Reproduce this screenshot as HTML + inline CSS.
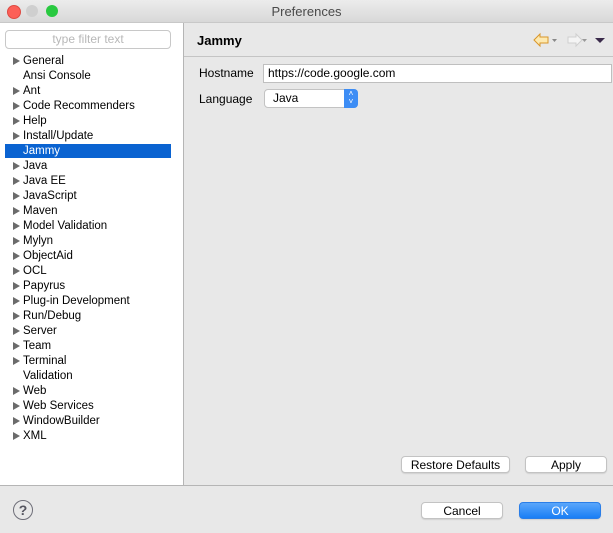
<html><head><style>
body{margin:0;width:613px;height:533px;background:#e8e8e8;font-family:"Liberation Sans",sans-serif;font-size:12px;color:#000;position:relative;overflow:hidden}
.a{position:absolute}
.tb{left:0;top:0;width:613px;height:22px;background:linear-gradient(#ececec,#d8d8d8);border-bottom:1px solid #c8c8c8;text-align:center;line-height:23px;font-size:13px;color:#4a4a4a}
.dot{top:5px;width:12px;height:12px;border-radius:50%}
.left{left:0;top:23px;width:183px;height:462px;background:#fff;border-right:1px solid #b5b5b5}
.it{left:23px;height:15px;line-height:15px;font-size:11.5px}
.tri{left:13px;width:0;height:0;border-left:7px solid #6b6b6b;border-top:4px solid transparent;border-bottom:4px solid transparent}
.btn{background:#fff;border:1px solid #c3c3c3;border-radius:4px;text-align:center;line-height:16px;font-size:12px;box-shadow:0 1px 1px rgba(0,0,0,.1)}
</style></head><body>
<div class="a tb">Preferences</div>
<div class="a dot" style="left:7px;background:#fc5f57;border:0.5px solid #de4a42"></div>
<div class="a dot" style="left:26px;background:#cfcfcf"></div>
<div class="a dot" style="left:46px;background:#29c940"></div>
<div class="a left"></div>
<div class="a" style="left:5px;top:30px;width:164px;height:17px;border:1px solid #c8c8c8;border-radius:4px;background:#fff;text-align:center;line-height:17px;color:#b8b8b8;font-size:12px">type filter text</div>
<div class="a" style="left:5px;top:144px;width:166px;height:14px;background:#0a63d1"></div>
<div id="tree"></div>
<script>
var items=[["General",1],["Ansi Console",0],["Ant",1],["Code Recommenders",1],["Help",1],["Install/Update",1],["Jammy",0],["Java",1],["Java EE",1],["JavaScript",1],["Maven",1],["Model Validation",1],["Mylyn",1],["ObjectAid",1],["OCL",1],["Papyrus",1],["Plug-in Development",1],["Run/Debug",1],["Server",1],["Team",1],["Terminal",1],["Validation",0],["Web",1],["Web Services",1],["WindowBuilder",1],["XML",1]];
var h="";items.forEach(function(x,i){var y=54+i*15;h+='<div class="a it" style="top:'+y+'px;'+(i==6?'color:#fff':'')+'">'+x[0]+'</div>';if(x[1])h+='<div class="a tri" style="top:'+(y+3)+'px"></div>';});
document.getElementById('tree').innerHTML=h;
</script>
<div class="a" style="left:197px;top:33px;font-weight:bold;font-size:13px">Jammy</div>
<div class="a" style="left:184px;top:56px;width:429px;height:1px;background:#c4c4c4"></div>
<svg class="a" style="left:531px;top:32px" width="80" height="16">
<path d="M3 8 L9 2 V5 H17 V11 H9 V14 Z" fill="#fde9b0" stroke="#d9962a" stroke-width="1"/>
<path d="M21 7 h5 l-2.5 3z" fill="#888"/>
<path d="M51 8 L45 2 V5 H37 V11 H45 V14 Z" fill="#f4f4f4" stroke="#cfcfcf" stroke-width="1"/>
<path d="M51 7 h5 l-2.5 3z" fill="#999"/>
<path d="M64 6 h10 l-5 5z" fill="#3a2a4a"/>
</svg>
<div class="a" style="left:199px;top:66px;font-size:12px">Hostname</div>
<div class="a" style="left:263px;top:64px;width:343px;height:17px;background:#fff;border:1px solid #bfbfbf;line-height:17px;padding-left:4px;font-size:12px">https://code.google.com</div>
<div class="a" style="left:199px;top:92px;font-size:12px">Language</div>
<div class="a" style="left:264px;top:89px;width:92px;height:17px;background:#fff;border:1px solid #c3c3c3;border-radius:4px;line-height:17px;font-size:12px"><span style="padding-left:8px">Java</span>
<div class="a" style="right:-1px;top:-1px;width:14px;height:19px;background:#3d8df5;border-radius:0 4px 4px 0;color:#fff;font-size:8px;text-align:center;line-height:8px;padding-top:1px;box-sizing:border-box">˄<br>˅</div></div>
<div class="a btn" style="left:401px;top:456px;width:107px;height:15px">Restore Defaults</div>
<div class="a btn" style="left:525px;top:456px;width:80px;height:15px">Apply</div>
<div class="a" style="left:0;top:485px;width:613px;height:1px;background:#b5b5b5"></div>
<div class="a" style="left:13px;top:500px;width:18px;height:18px;border:1.5px solid #6e6e78;border-radius:50%;text-align:center;line-height:18px;font-weight:bold;font-size:14px;color:#55555f;box-sizing:content-box">?</div>
<div class="a btn" style="left:421px;top:502px;width:80px;height:15px">Cancel</div>
<div class="a btn" style="left:519px;top:502px;width:80px;height:15px;background:linear-gradient(#5aa6fb,#1a7ef5);border-color:#2a7ee8;color:#fff">OK</div>
</body></html>
